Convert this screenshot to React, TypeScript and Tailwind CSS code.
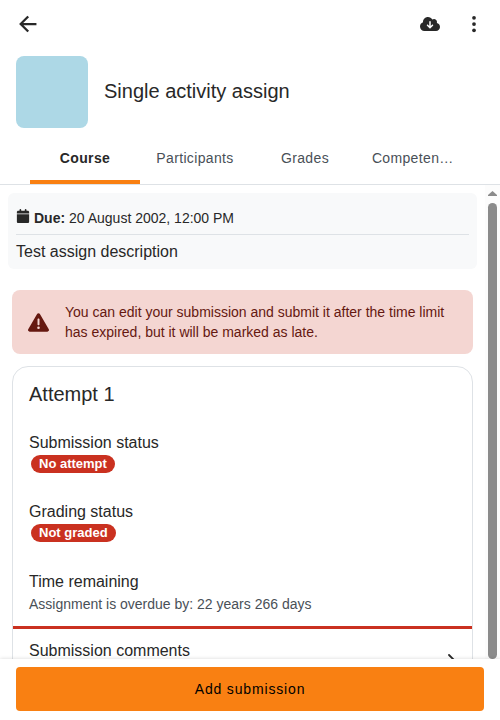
import React from "react";
import { FaCalendar, FaCloudArrowDown, FaTriangleExclamation } from "react-icons/fa6";
import { IoArrowBackSharp, IoEllipsisVertical } from "react-icons/io5";

const tabs = ["Participants", "Grades"];

function Header() {
  return (
    <header className="flex h-12 shrink-0 items-center px-4">
      <IoArrowBackSharp className="h-6 w-6" />
      <div className="ml-auto flex items-center gap-6">
        <FaCloudArrowDown className="h-5 w-5" />
        <IoEllipsisVertical className="h-5 w-5" />
      </div>
    </header>
  );
}

function Tabs() {
  return (
    <nav className="flex h-[49px] shrink-0 justify-center border-b border-[#dee2e6] text-sm leading-5 tracking-[0.35px] text-[#495057]">
      <div className="flex w-[110px] justify-center border-b-4 border-[#f98012] pt-3 font-bold text-[#282828]">
        Course
      </div>
      {tabs.map((tab) => (
        <div key={tab} className="flex w-[110px] justify-center pt-3">
          {tab}
        </div>
      ))}
      <div className="flex w-[110px] justify-center pt-3 pr-[4.5px]">Competen…</div>
    </nav>
  );
}

function Status({ label, value }: { label: string; value: string }) {
  return (
    <div className="h-[69px]">
      <p className="text-base leading-6">{label}</p>
      <div className="ml-0.5 flex">
        <span className="h-[18px] rounded-full bg-[#ca3120] px-2 text-[13px] leading-[18px] font-bold text-white">
          {value}
        </span>
      </div>
    </div>
  );
}

function Scrollbar() {
  return (
    <div className="flex w-[15px] shrink-0 flex-col items-center bg-[#fcfcfc] pt-1.5">
      <svg width="9" height="5" viewBox="0 0 9 5" className="shrink-0">
        <path d="M0 5V4L4.5 0 9 4v1z" fill="#8b8b8b" />
      </svg>
      <div className="mt-[7px] w-[9px] flex-1 rounded-full bg-[#8b8b8b]" />
    </div>
  );
}

export default function App() {
  return (
    <div className="flex h-[720px] w-[500px] flex-col overflow-hidden bg-white font-['Liberation_Sans',Arial,sans-serif] text-[#282828]">
      <Header />
      <section className="flex h-[88px] shrink-0 items-center gap-4 px-4">
        <div className="h-[72px] w-[72px] rounded-lg bg-[#add8e6]" />
        <h1 className="pb-0.5 text-xl leading-6">Single activity assign</h1>
      </section>
      <Tabs />
      <div className="flex min-h-0 flex-1">
        <main className="min-w-0 flex-1 overflow-hidden">
          <section className="mx-2 mt-2 h-[76px] rounded-md bg-[#f8f9fa] px-2 pt-4">
            <div className="flex h-[26px] border-b border-[#dee2e6] text-sm leading-[18px]">
              <FaCalendar className="mr-1 h-3.5 w-3.5" />
              <p>
                <strong>Due:</strong> 20 August 2002, 12:00 PM
              </p>
            </div>
            <p className="mt-[5px] text-base leading-6">Test assign description</p>
          </section>
          <section className="mx-3 mt-[21px] flex h-16 items-center rounded-lg bg-[#f4d6d2] pr-4 pl-4 text-[#651810]">
            <FaTriangleExclamation className="mr-4 h-[21px] w-[21px] shrink-0" />
            <p className="text-sm leading-5">
              You can edit your submission and submit it after the time limit has expired, but it will be marked as late.
            </p>
          </section>
          <section className="mx-3 mt-3 h-[400px] rounded-2xl border border-[#dee2e6] pt-[15px]">
            <div className="px-4">
              <h2 className="mb-[25px] text-xl leading-6">Attempt 1</h2>
              <Status label="Submission status" value="No attempt" />
              <Status label="Grading status" value="Not graded" />
              <p className="mt-px text-base leading-6">Time remaining</p>
              <p className="text-sm leading-5 text-[#495057]">Assignment is overdue by: 22 years 266 days</p>
            </div>
            <div className="mt-3 flex h-16 justify-between border-t-[3px] border-[#ca3120] px-4 pt-2.5">
              <p className="text-base leading-6">Submission comments</p>
              <svg width="8" height="14" viewBox="0 0 8 14" className="mt-[15px]" fill="none" stroke="#282828" strokeWidth="1.8" strokeLinecap="round">
                <path d="m1 1 6 6-6 6" />
              </svg>
            </div>
          </section>
        </main>
        <Scrollbar />
      </div>
      <footer className="relative h-[61px] shrink-0 bg-white px-4 pt-2 shadow-[0_0_4px_rgba(0,0,0,0.16)]">
        <button className="h-11 w-full rounded bg-[#f98012] text-sm font-normal tracking-[0.84px] text-black">
          Add submission
        </button>
      </footer>
    </div>
  );
}
